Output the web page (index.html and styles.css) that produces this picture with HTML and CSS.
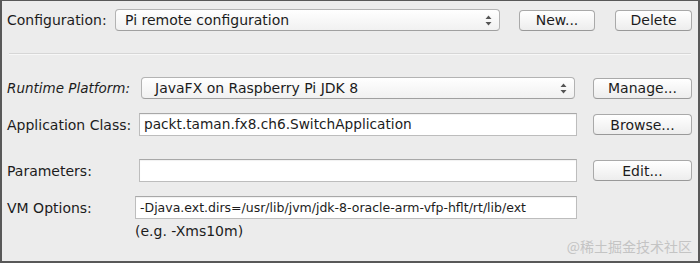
FILE: index.html
```html
<!DOCTYPE html>
<html lang="en">
<head>
    <meta charset="UTF-8">
    <title>Run Configuration</title>
    <link rel="stylesheet" href="styles.css">
</head>
<body>
    <div class="panel">
        <div class="config-row">
            <span class="label">Configuration:</span>
            <div class="combo config-combo">
                <span>Pi remote configuration</span>
                <svg class="arrows" width="7" height="11" viewBox="0 0 7 11"><path d="M3.5 0.5 L6.5 4 L0.5 4 Z M0.5 7 L6.5 7 L3.5 10.5 Z" fill="#555"/></svg>
            </div>
            <button class="btn new-btn">New...</button>
            <button class="btn delete-btn">Delete</button>
        </div>

        <div class="sep"></div>

        <div class="form-row runtime-row">
            <span class="label italic">Runtime Platform:</span>
            <div class="combo platform-combo">
                <span>JavaFX on Raspberry Pi JDK 8</span>
                <svg class="arrows" width="7" height="11" viewBox="0 0 7 11"><path d="M3.5 0.5 L6.5 4 L0.5 4 Z M0.5 7 L6.5 7 L3.5 10.5 Z" fill="#555"/></svg>
            </div>
            <button class="btn">Manage...</button>
        </div>

        <div class="form-row class-row">
            <span class="label">Application Class:</span>
            <div class="field">packt.taman.fx8.ch6.SwitchApplication</div>
            <button class="btn">Browse...</button>
        </div>

        <div class="form-row params-row">
            <span class="label">Parameters:</span>
            <div class="field"></div>
            <button class="btn">Edit...</button>
        </div>

        <div class="form-row vm-row">
            <span class="label">VM Options:</span>
            <div class="field vm-field">-Djava.ext.dirs=/usr/lib/jvm/jdk-8-oracle-arm-vfp-hflt/rt/lib/ext</div>
        </div>

        <div class="form-row hint-row">
            <span></span>
            <span class="hint">(e.g. -Xms10m)</span>
        </div>

        <span class="watermark">@稀土掘金技术社区</span>
    </div>
</body>
</html>
```

FILE: styles.css
```css
html, body {
    margin: 0;
    padding: 0;
}
body {
    width: 700px;
    height: 263px;
    font-family: "DejaVu Sans", "Noto Sans", sans-serif;
    font-size: 13px;
    color: #1c1c1c;
}
.panel {
    position: relative;
    box-sizing: border-box;
    width: 700px;
    height: 263px;
    background: #ececec;
    border: 2px solid #585858;
    border-top-width: 1px;
    padding: 8px 6px 0 5px;
}
.label {
    font-size: 14px;
    white-space: nowrap;
}
.italic {
    font-style: italic;
    font-size: 13.5px;
}

/* top row */
.config-row {
    display: flex;
    align-items: center;
    height: 22px;
}
.config-row .label {
    width: 108px;
}
.combo {
    box-sizing: border-box;
    display: flex;
    align-items: center;
    justify-content: space-between;
    height: 22px;
    background: linear-gradient(#ffffff, #f1f1f1);
    border: 1px solid #b3b3b3;
    border-bottom-color: #a0a0a0;
    border-radius: 4px;
    padding: 0 7px 0 9px;
    font-size: 14px;
}
.config-combo {
    width: 385px;
}
.platform-combo {
    width: 434px;
    margin-left: 2px;
    padding-left: 13px;
}
.arrows {
    display: block;
}
.btn {
    box-sizing: border-box;
    height: 21px;
    font-family: inherit;
    font-size: 14px;
    color: #1c1c1c;
    background: linear-gradient(#ffffff, #ededed);
    border: 1px solid #a9a9a9;
    border-bottom-color: #999;
    border-radius: 4px;
    padding: 0;
}
.new-btn {
    width: 76px;
    margin-left: 19px;
}
.delete-btn {
    width: 77px;
    margin-left: 20px;
}
.sep {
    height: 1px;
    background: #d6d6d6;
    margin: 22px 1px 0 2px;
    border-bottom: 1px solid #f7f7f7;
}

/* form rows */
.form-row {
    display: grid;
    grid-template-columns: 116px 438px 99px;
    column-gap: 16px;
    align-items: center;
    height: 23px;
}
.runtime-row {
    height: 22px;
    margin-top: 22px;
}
.class-row {
    margin-top: 14px;
}
.params-row {
    margin-top: 23px;
}
.vm-row {
    margin-top: 14px;
}
.hint-row {
    height: 18px;
    margin-top: 3px;
}
.field {
    box-sizing: border-box;
    height: 23px;
    background: #fff;
    border: 1px solid #bdbdbd;
    border-top-color: #a8a8a8;
    box-shadow: inset 0 1px 1px rgba(0,0,0,0.06);
    padding: 0 4px;
    font-size: 13.7px;
    line-height: 21px;
    white-space: nowrap;
    overflow: hidden;
}
.vm-field {
    margin-left: -4px;
    width: 442px;
    font-size: 12.5px;
}
.hint {
    margin-left: -4px;
    font-size: 14px;
}
.watermark {
    position: absolute;
    right: 6px;
    bottom: 5px;
    font-family: "Noto Sans CJK SC", sans-serif;
    font-size: 14px;
    color: #c4c4c4;
}
```
